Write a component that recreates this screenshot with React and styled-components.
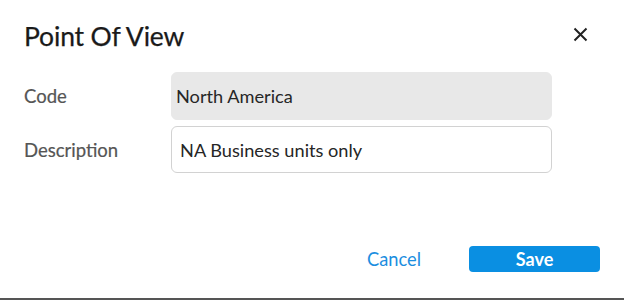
import React from "react";
import styled, { createGlobalStyle } from "styled-components";

const Global = createGlobalStyle`
  html, body { margin: 0; padding: 0; background: #fff; }
  body { font-family: Lato, "Open Sans", sans-serif; }
`;

const Dialog = styled.div`
  width: 624px;
  height: 300px;
  box-sizing: border-box;
  background: #fff;
  border-bottom: 2px solid #555;
  display: flex;
  flex-direction: column;
  padding: 0 24px;
`;

const Header = styled.div`
  display: flex;
  align-items: center;
  justify-content: space-between;
  height: 70px;
  padding-top: 2px;
  box-sizing: border-box;
`;

const Title = styled.h2`
  margin: 0;
  font-size: 26.5px;
  font-weight: 400;
  color: #1a1a1a;
  letter-spacing: -0.15px;
  -webkit-text-stroke: 0.25px #1a1a1a;
`;

const CloseButton = styled.button`
  border: 0;
  background: none;
  padding: 0;
  margin: 0 12px 4px 0;
  width: 16px;
  height: 16px;
  display: flex;
  align-items: center;
  justify-content: center;
  color: #222;
  cursor: pointer;
`;

const Form = styled.div`
  display: flex;
  flex-direction: column;
  gap: 6px;
  padding-top: 2px;
`;

const Row = styled.div`
  display: grid;
  grid-template-columns: 147px 381px;
  align-items: center;
`;

const Label = styled.label`
  font-size: 18.5px;
  color: #555;
  -webkit-text-stroke: 0.2px #555;
`;

const Field = styled.div`
  box-sizing: border-box;
  height: ${(p) => (p.$readOnly ? "48px" : "47px")};
  border-radius: 6px;
  border: 1px solid ${(p) => (p.$readOnly ? "#e8e8e8" : "#d2d2d2")};
  background: ${(p) => (p.$readOnly ? "#e8e8e8" : "#fff")};
  padding-left: ${(p) => (p.$readOnly ? "4px" : "8px")};
  display: flex;
  align-items: center;
  font-size: 18.2px;
  color: #262626;
`;

const Footer = styled.div`
  margin-top: auto;
  display: flex;
  justify-content: flex-end;
  align-items: center;
  gap: 42px;
  padding-bottom: 26px;
`;

const TextButton = styled.button`
  border: 0;
  background: none;
  padding: 0 6px;
  font-family: inherit;
  font-size: 18.3px;
  color: #1b8ee0;
  cursor: pointer;
`;

const PrimaryButton = styled.button`
  border: 0;
  width: 131px;
  height: 26px;
  border-radius: 4px;
  background: #0a8fe2;
  color: #fff;
  font-family: inherit;
  font-size: 18px;
  font-weight: 700;
  cursor: pointer;
`;

export default function App() {
  return (
    <>
      <Global />
      <Dialog>
        <Header>
          <Title>Point Of View</Title>
          <CloseButton aria-label="Close">
            <svg width="15" height="15" viewBox="0 0 15 15">
              <path d="M1.5 1.5 L13.5 13.5 M13.5 1.5 L1.5 13.5" stroke="currentColor" strokeWidth="2" />
            </svg>
          </CloseButton>
        </Header>
        <Form>
          <Row>
            <Label>Code</Label>
            <Field $readOnly>North America</Field>
          </Row>
          <Row>
            <Label>Description</Label>
            <Field>NA Business units only</Field>
          </Row>
        </Form>
        <Footer>
          <TextButton>Cancel</TextButton>
          <PrimaryButton>Save</PrimaryButton>
        </Footer>
      </Dialog>
    </>
  );
}
